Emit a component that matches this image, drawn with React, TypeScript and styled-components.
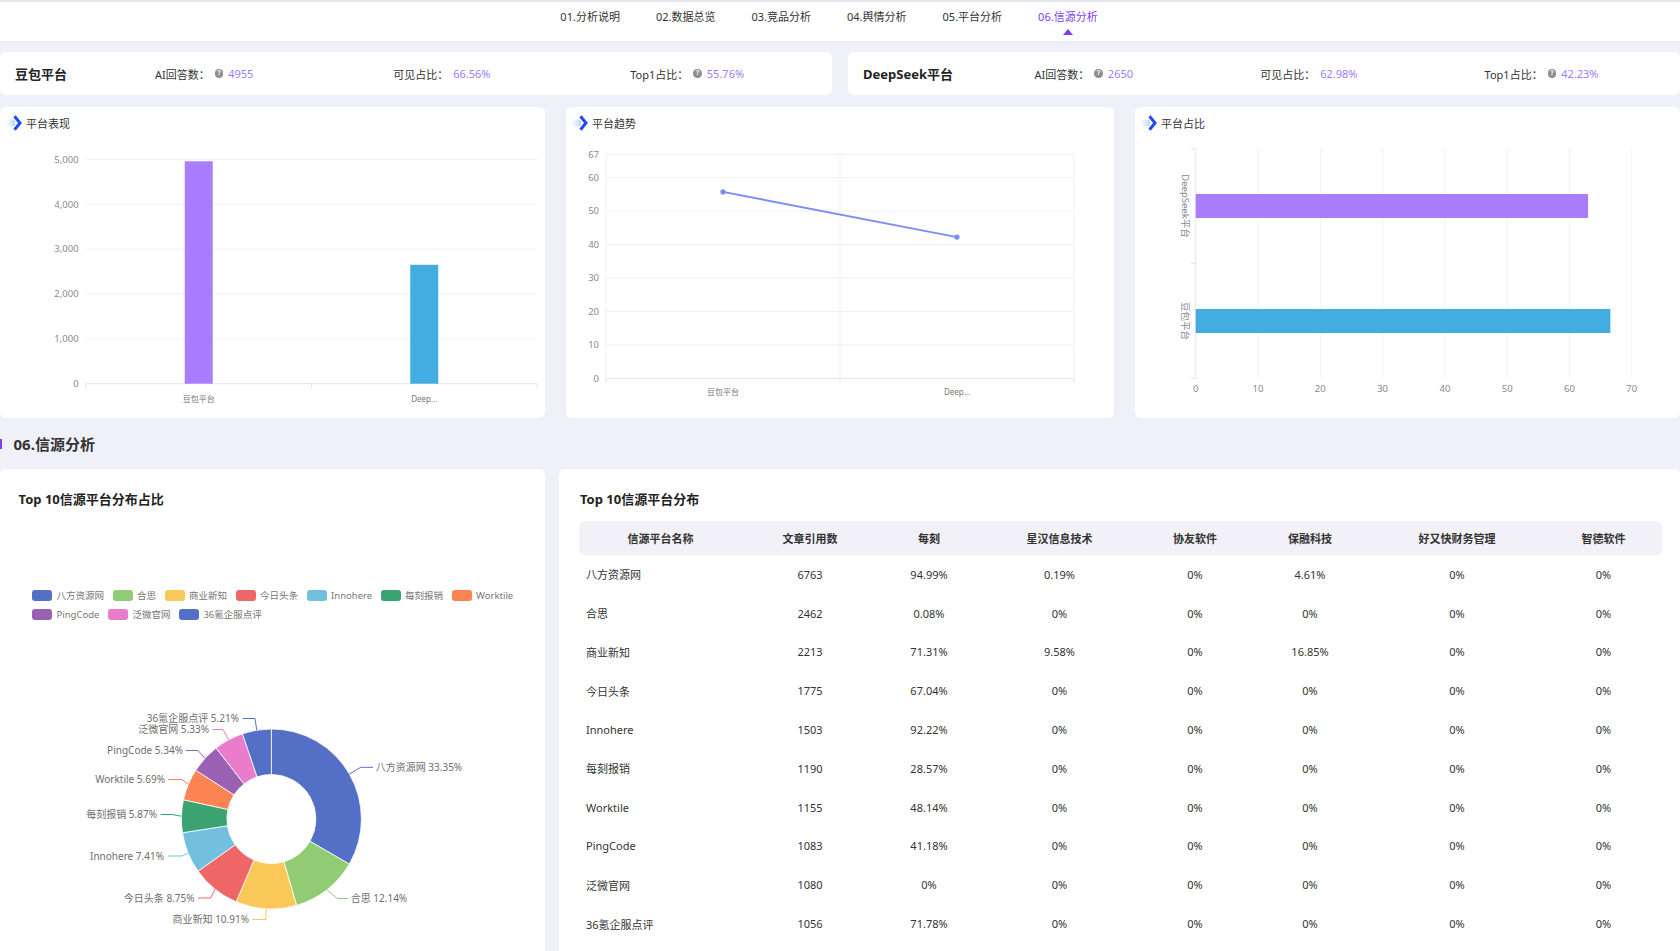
import React from "react";
import styled, { createGlobalStyle } from "styled-components";

const GlobalStyle = createGlobalStyle`
  html, body { margin: 0; padding: 0; background: #f0f0f9; overflow: hidden; }
  body { font-family: "Noto Sans", "Noto Sans CJK SC", sans-serif; color: #333; }
  * { box-sizing: border-box; }
`;

const Page = styled.div`
  width: 1680px;
  height: 951px;
  overflow: hidden;
  background: #f0f0f9;
`;

/* ---------- top nav ---------- */
const Nav = styled.nav`
  height: 41px;
  background: #fff;
  border-top: 2px solid #e6e6ea;
  display: flex;
  justify-content: center;
  gap: 36px;
  padding-right: 22px;
  box-shadow: 0 1px 4px rgba(30, 30, 80, 0.04);
`;
const NavItem = styled.div<{ $active?: boolean }>`
  display: flex;
  flex-direction: column;
  align-items: center;
  padding-top: 7px;
  font-size: 11px;
  line-height: 16px;
  white-space: nowrap;
  color: ${(p) => (p.$active ? "#7c3ff2" : "#333")};
`;
const Caret = styled.span`
  margin-top: 4px;
  width: 0;
  height: 0;
  border-left: 5px solid transparent;
  border-right: 5px solid transparent;
  border-bottom: 6px solid #7c3ff2;
`;

/* ---------- summary cards ---------- */
const CardRow = styled.div`
  display: grid;
  grid-template-columns: 1fr 1fr;
  gap: 16px;
  margin-top: 11px;
`;
const StatCard = styled.div`
  height: 43px;
  background: #fff;
  border-radius: 6px;
  display: flex;
  align-items: center;
  padding: 0 18px 0 15px;
`;
const PlatformName = styled.div`
  font-size: 13px;
  font-weight: 700;
  color: #222;
  white-space: nowrap;
  margin-right: 18px;
`;
const StatGroup = styled.div`
  flex: 1;
  display: flex;
  align-items: center;
  justify-content: space-around;
`;
const Stat = styled.div`
  display: flex;
  align-items: center;
  gap: 5px;
  font-size: 11px;
  color: #333;
  white-space: nowrap;
`;
const StatValue = styled.span`
  color: #a07cf5;
`;
const HelpIcon = styled.span`
  width: 8.5px;
  height: 8.5px;
  border-radius: 50%;
  background: #8f8f8f;
  color: #fff;
  font-size: 6.5px;
  font-weight: 700;
  line-height: 8.5px;
  text-align: center;
  font-family: "Liberation Sans", sans-serif;
`;

/* ---------- chart panels ---------- */
const ChartRow = styled.div`
  display: grid;
  grid-template-columns: 545px 548px 1fr;
  gap: 21px;
  margin-top: 12px;
  height: 311px;
`;
const ChartPanel = styled.div`
  background: #fff;
  border-radius: 6px;
  display: flex;
  flex-direction: column;
  overflow: hidden;
`;
const ChartHeader = styled.div`
  height: 32px;
  display: flex;
  align-items: center;
  gap: 4px;
  padding-left: 6px;
  font-size: 11px;
  color: #333;
`;
const ChartSvg = styled.svg`
  display: block;
  flex: none;
`;

const TitleIcon = () => (
  <svg width="16" height="16" viewBox="0 0 16 16">
    <defs>
      <linearGradient id="tailg" x1="0" x2="1" y1="0" y2="0">
        <stop offset="0" stopColor="#dbe7ff" stopOpacity="0.15" />
        <stop offset="1" stopColor="#bcd3ff" stopOpacity="1" />
      </linearGradient>
    </defs>
    <rect x="0" y="4.5" width="9" height="7" rx="2" fill="url(#tailg)" />
    <polyline points="8.5,1.2 14,8 8.5,14.8" fill="none" stroke="#1f4df2" strokeWidth="3" strokeLinejoin="miter" />
  </svg>
);

/* ---------- section heading ---------- */
const SectionHeading = styled.div`
  height: 51px;
  display: flex;
  align-items: center;
`;
const SectionBar = styled.span`
  width: 2px;
  height: 10px;
  background: #7c3ff2;
  margin-right: 11.5px;
`;
const SectionTitle = styled.h2`
  margin: 0;
  font-size: 15px;
  font-weight: 700;
  color: #333;
`;

/* ---------- bottom panels ---------- */
const BottomRow = styled.div`
  display: grid;
  grid-template-columns: 545px 1fr;
  gap: 14px;
  height: 482px;
`;
const LeftPanel = styled.div`
  background: #fff;
  border-radius: 6px 6px 0 0;
  padding-top: 21px;
  display: flex;
  flex-direction: column;
`;
const RightPanel = styled.div`
  background: #fff;
  border-radius: 6px 6px 0 0;
  padding: 21px 18px 0 20px;
`;
const PanelTitle = styled.h3<{ $indent: number }>`
  margin: 0;
  font-size: 13px;
  line-height: 18px;
  font-weight: 700;
  color: #222;
  padding-left: ${(p) => p.$indent}px;
`;
const Legend = styled.div`
  margin-top: 77.5px;
  padding-left: 32px;
  display: flex;
  flex-direction: column;
`;
const LegendRow = styled.div`
  height: 19.3px;
  display: flex;
  align-items: center;
  gap: 8.5px;
`;
const LegendItem = styled.div`
  display: flex;
  align-items: center;
  gap: 4.5px;
  font-size: 9.5px;
  color: #777;
  white-space: nowrap;
`;
const Swatch = styled.span<{ $color: string }>`
  width: 20px;
  height: 11px;
  border-radius: 3px;
  background: ${(p) => p.$color};
`;

const Table = styled.table`
  width: 1083px;
  table-layout: fixed;
  border-collapse: separate;
  border-spacing: 0;
  margin-top: 13px;
  font-size: 11px;
  color: #333;
`;
const Th = styled.th`
  height: 34px;
  padding: 0;
  background: #f1f1f7;
  font-weight: 700;
  text-align: center;
  color: #333;
  &:first-child { border-radius: 6px 0 0 6px; }
  &:last-child { border-radius: 0 6px 6px 0; }
`;
const Td = styled.td<{ $left?: boolean }>`
  height: 38.8px;
  padding: 0 0 0 ${(p) => (p.$left ? 7 : 0)}px;
  text-align: ${(p) => (p.$left ? "left" : "center")};
  white-space: nowrap;
`;

/* ---------- data ---------- */
const navItems = ["01.分析说明", "02.数据总览", "03.竞品分析", "04.舆情分析", "05.平台分析", "06.信源分析"];

const platforms = [
  { name: "豆包平台", ai: "4955", vis: "66.56%", top: "55.76%" },
  { name: "DeepSeek平台", ai: "2650", vis: "62.98%", top: "42.23%" },
];

const pieData = [
  { name: "八方资源网", value: 33.35, color: "#5470c6", p2: [360.7, 767.3], p3: 373, tx: 375.7, anchor: "start" },
  { name: "合思", value: 12.14, color: "#91cc75", p2: [337.5, 898.5], p3: 348, tx: 350.7, anchor: "start" },
  { name: "商业新知", value: 10.91, color: "#fac858", p2: [266, 919.5], p3: 252, tx: 249, anchor: "end" },
  { name: "今日头条", value: 8.75, color: "#ee6666", p2: [210.7, 898], p3: 198, tx: 194.6, anchor: "end" },
  { name: "Innohere", value: 7.41, color: "#73c0de", p2: [182, 856], p3: 168, tx: 164, anchor: "end" },
  { name: "每刻报销", value: 5.87, color: "#3ba272", p2: [172, 814.5], p3: 160.7, tx: 157, anchor: "end" },
  { name: "Worktile", value: 5.69, color: "#fc8452", p2: [182, 779.5], p3: 168, tx: 165, anchor: "end" },
  { name: "PingCode", value: 5.34, color: "#9a60b4", p2: [198, 750.5], p3: 186, tx: 183, anchor: "end" },
  { name: "泛微官网", value: 5.33, color: "#ea7ccc", p2: [223, 729.5], p3: 212.5, tx: 209, anchor: "end" },
  { name: "36氪企服点评", value: 5.21, color: "#5470c6", p2: [255, 718.5], p3: 243, tx: 239, anchor: "end" },
];

const tableHead = ["信源平台名称", "文章引用数", "每刻", "星汉信息技术", "协友软件", "保融科技", "好又快财务管理", "智德软件"];
const colWidths = [163, 136, 102, 159, 112, 118, 176, 117];
const tableRows = [
  ["八方资源网", "6763", "94.99%", "0.19%", "0%", "4.61%", "0%", "0%"],
  ["合思", "2462", "0.08%", "0%", "0%", "0%", "0%", "0%"],
  ["商业新知", "2213", "71.31%", "9.58%", "0%", "16.85%", "0%", "0%"],
  ["今日头条", "1775", "67.04%", "0%", "0%", "0%", "0%", "0%"],
  ["Innohere", "1503", "92.22%", "0%", "0%", "0%", "0%", "0%"],
  ["每刻报销", "1190", "28.57%", "0%", "0%", "0%", "0%", "0%"],
  ["Worktile", "1155", "48.14%", "0%", "0%", "0%", "0%", "0%"],
  ["PingCode", "1083", "41.18%", "0%", "0%", "0%", "0%", "0%"],
  ["泛微官网", "1080", "0%", "0%", "0%", "0%", "0%", "0%"],
  ["36氪企服点评", "1056", "71.78%", "0%", "0%", "0%", "0%", "0%"],
];

const AXIS_TEXT = "#8a8a8a";
const GRID = "#f1f1f4";
const AXIS_LINE = "#e4e4ea";

/* ---------- charts ---------- */
const BarChart = () => {
  const x0 = 86, x1 = 537, yTop = 159.3, yBot = 383.7;
  const step = (yBot - yTop) / 5;
  const h = (v: number) => (v / 5000) * (yBot - yTop);
  const ticks = [5000, 4000, 3000, 2000, 1000, 0];
  const bars = [
    { label: "豆包平台", v: 4955, c: "#a97dfe", cx: 198.75 },
    { label: "Deep...", v: 2650, c: "#43ade1", cx: 424.25 },
  ];
  return (
    <ChartSvg width="545" height="279" viewBox="0 139 545 279">
      {ticks.map((t, i) => (
        <g key={t}>
          <line x1={x0} x2={x1} y1={yTop + i * step} y2={yTop + i * step} stroke={t === 0 ? AXIS_LINE : GRID} />
          <text x={78.6} y={yTop + i * step} dy="0.35em" textAnchor="end" fontSize="9.5" fill={AXIS_TEXT}>
            {t.toLocaleString("en-US")}
          </text>
        </g>
      ))}
      {[x0, 311.5, x1].map((x) => (
        <line key={x} x1={x} x2={x} y1={yBot} y2={yBot + 5} stroke={AXIS_LINE} />
      ))}
      {bars.map((b) => (
        <g key={b.label}>
          <rect x={b.cx - 14} y={yBot - h(b.v)} width={28} height={h(b.v)} fill={b.c} />
          <text x={b.cx} y={399} dy="0.35em" textAnchor="middle" fontSize="8" fill="#777">
            {b.label}
          </text>
        </g>
      ))}
    </ChartSvg>
  );
};

const LineChart = () => {
  const x0 = 606, x1 = 1074, xm = 840, yTop = 154.3, yBot = 378.3;
  const y = (v: number) => yBot - (v / 67) * (yBot - yTop);
  const ticks = [67, 60, 50, 40, 30, 20, 10, 0];
  const pts = [
    { x: 723, v: 55.76, label: "豆包平台" },
    { x: 957, v: 42.23, label: "Deep..." },
  ];
  return (
    <ChartSvg width="548" height="279" viewBox="566 139 548 279">
      {ticks.map((t) => (
        <g key={t}>
          <line x1={x0} x2={x1} y1={y(t)} y2={y(t)} stroke={t === 0 ? AXIS_LINE : GRID} />
          <text x={599} y={y(t)} dy="0.35em" textAnchor="end" fontSize="9.5" fill={AXIS_TEXT}>
            {t}
          </text>
        </g>
      ))}
      {[x0, xm, x1].map((x) => (
        <g key={x}>
          <line x1={x} x2={x} y1={yTop} y2={yBot} stroke={GRID} />
          <line x1={x} x2={x} y1={yBot} y2={yBot + 5} stroke={AXIS_LINE} />
        </g>
      ))}
      <line x1={pts[0].x} y1={y(pts[0].v)} x2={pts[1].x} y2={y(pts[1].v)} stroke="#7b8df6" strokeWidth="2" />
      {pts.map((p) => (
        <g key={p.label}>
          <circle cx={p.x} cy={y(p.v)} r="2.6" fill="#7b8df6" />
          <text x={p.x} y={392} dy="0.35em" textAnchor="middle" fontSize="8" fill="#777">
            {p.label}
          </text>
        </g>
      ))}
    </ChartSvg>
  );
};

const HBarChart = () => {
  const x0 = 1195.7, unit = 6.23, yTop = 148.3, yBot = 378.3, yMid = 263.3;
  const ticks = [0, 10, 20, 30, 40, 50, 60, 70];
  const bars = [
    { label: "DeepSeek平台", v: 62.98, c: "#a97dfe", y: 194, cy: 206 },
    { label: "豆包平台", v: 66.56, c: "#43ade1", y: 309, cy: 321 },
  ];
  return (
    <ChartSvg width="545" height="279" viewBox="1135 139 545 279">
      {ticks.map((t) => (
        <g key={t}>
          <line x1={x0 + t * unit} x2={x0 + t * unit} y1={yTop} y2={yBot} stroke={t === 0 ? AXIS_LINE : GRID} />
          <text x={x0 + t * unit} y={388.7} dy="0.35em" textAnchor="middle" fontSize="9.5" fill={AXIS_TEXT}>
            {t}
          </text>
        </g>
      ))}
      {[yTop, yMid, yBot].map((yy) => (
        <line key={yy} x1={x0 - 5} x2={x0} y1={yy} y2={yy} stroke={AXIS_LINE} />
      ))}
      {bars.map((b) => (
        <g key={b.label}>
          <rect x={x0} y={b.y} width={b.v * unit} height={24} fill={b.c} />
          <text
            x={1185}
            y={b.cy}
            transform={`rotate(90 1185 ${b.cy})`}
            textAnchor="middle"
            dy="0.35em"
            fontSize="9.5"
            fill="#888"
          >
            {b.label}
          </text>
        </g>
      ))}
    </ChartSvg>
  );
};

const PieChart = () => {
  const cx = 271.4, cy = 819, R = 90, r = 44.5;
  const pt = (a: number, rad: number) => {
    const t = (a * Math.PI) / 180;
    return [cx + rad * Math.sin(t), cy - rad * Math.cos(t)];
  };
  let acc = 0;
  const slices = pieData.map((d) => {
    const a0 = acc * 3.6;
    acc += d.value;
    const a1 = acc * 3.6;
    const large = a1 - a0 > 180 ? 1 : 0;
    const [ox0, oy0] = pt(a0, R);
    const [ox1, oy1] = pt(a1, R);
    const [ix1, iy1] = pt(a1, r);
    const [ix0, iy0] = pt(a0, r);
    const path = `M${ox0},${oy0} A${R},${R} 0 ${large} 1 ${ox1},${oy1} L${ix1},${iy1} A${r},${r} 0 ${large} 0 ${ix0},${iy0} Z`;
    const p1 = pt((a0 + a1) / 2, R);
    return { ...d, path, p1 };
  });
  return (
    <ChartSvg width="545" height="327" viewBox="0 624 545 327">
      {slices.map((s) => (
        <path key={s.name} d={s.path} fill={s.color} stroke="#fff" strokeWidth="0.8" />
      ))}
      {slices.map((s) => (
        <g key={s.name + "l"}>
          <polyline
            points={`${s.p1[0]},${s.p1[1]} ${s.p2[0]},${s.p2[1]} ${s.p3},${s.p2[1]}`}
            fill="none"
            stroke={s.color}
            strokeWidth="1"
          />
          <text
            x={s.tx}
            y={s.p2[1]}
            dy="0.35em"
            textAnchor={s.anchor as "start" | "end"}
            fontSize="10"
            fill="#6e6e6e"
          >
            {s.name} {s.value.toFixed(2)}%
          </text>
        </g>
      ))}
    </ChartSvg>
  );
};

/* ---------- app ---------- */
export default function App() {
  const legendRows = [pieData.slice(0, 7), pieData.slice(7)];
  return (
    <Page>
      <GlobalStyle />
      <Nav>
        {navItems.map((n, i) => (
          <NavItem key={n} $active={i === navItems.length - 1}>
            {n}
            {i === navItems.length - 1 && <Caret />}
          </NavItem>
        ))}
      </Nav>

      <CardRow>
        {platforms.map((p) => (
          <StatCard key={p.name}>
            <PlatformName>{p.name}</PlatformName>
            <StatGroup>
              <Stat>
                AI回答数：<HelpIcon>?</HelpIcon>
                <StatValue>{p.ai}</StatValue>
              </Stat>
              <Stat>
                可见占比：<StatValue>{p.vis}</StatValue>
              </Stat>
              <Stat>
                Top1占比：<HelpIcon>?</HelpIcon>
                <StatValue>{p.top}</StatValue>
              </Stat>
            </StatGroup>
          </StatCard>
        ))}
      </CardRow>

      <ChartRow>
        <ChartPanel>
          <ChartHeader>
            <TitleIcon />
            平台表现
          </ChartHeader>
          <BarChart />
        </ChartPanel>
        <ChartPanel>
          <ChartHeader>
            <TitleIcon />
            平台趋势
          </ChartHeader>
          <LineChart />
        </ChartPanel>
        <ChartPanel>
          <ChartHeader>
            <TitleIcon />
            平台占比
          </ChartHeader>
          <HBarChart />
        </ChartPanel>
      </ChartRow>

      <SectionHeading>
        <SectionBar />
        <SectionTitle>06.信源分析</SectionTitle>
      </SectionHeading>

      <BottomRow>
        <LeftPanel>
          <PanelTitle $indent={18.6}>Top 10信源平台分布占比</PanelTitle>
          <Legend>
            {legendRows.map((row, i) => (
              <LegendRow key={i}>
                {row.map((d) => (
                  <LegendItem key={d.name}>
                    <Swatch $color={d.color} />
                    {d.name}
                  </LegendItem>
                ))}
              </LegendRow>
            ))}
          </Legend>
          <PieChart />
        </LeftPanel>
        <RightPanel>
          <PanelTitle $indent={1}>Top 10信源平台分布</PanelTitle>
          <Table>
            <colgroup>
              {colWidths.map((w, i) => (
                <col key={i} style={{ width: w }} />
              ))}
            </colgroup>
            <thead>
              <tr>
                {tableHead.map((h) => (
                  <Th key={h}>{h}</Th>
                ))}
              </tr>
            </thead>
            <tbody>
              {tableRows.map((row) => (
                <tr key={row[0]}>
                  {row.map((c, i) => (
                    <Td key={i} $left={i === 0}>
                      {c}
                    </Td>
                  ))}
                </tr>
              ))}
            </tbody>
          </Table>
        </RightPanel>
      </BottomRow>
    </Page>
  );
}
